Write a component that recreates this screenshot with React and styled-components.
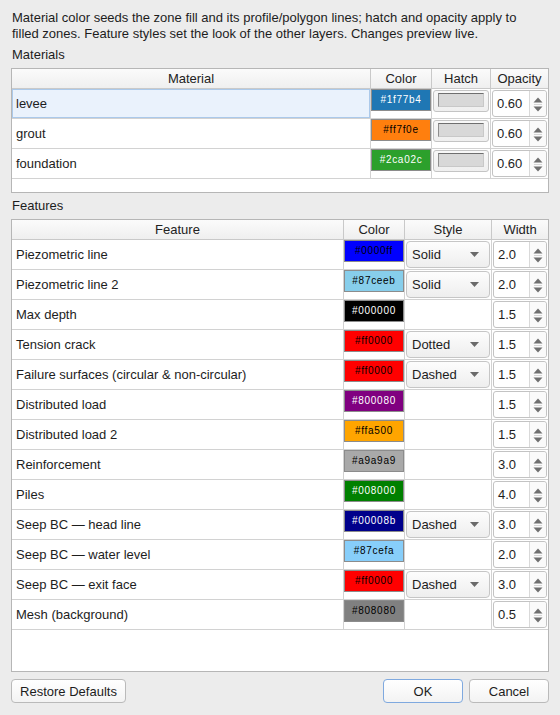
import styled, { createGlobalStyle } from "styled-components";

const materials = [
  { name: "levee", color: "#1f77b4", ink: "#fff", opacity: "0.60", selected: true },
  { name: "grout", color: "#ff7f0e", ink: "#000", opacity: "0.60" },
  { name: "foundation", color: "#2ca02c", ink: "#fff", opacity: "0.60" },
];

const features = [
  { name: "Piezometric line", color: "#0000ff", ink: "#000", style: "Solid", width: "2.0" },
  { name: "Piezometric line 2", color: "#87ceeb", ink: "#000", style: "Solid", width: "2.0" },
  { name: "Max depth", color: "#000000", ink: "#fff", width: "1.5" },
  { name: "Tension crack", color: "#ff0000", ink: "#000", style: "Dotted", width: "1.5" },
  { name: "Failure surfaces (circular & non-circular)", color: "#ff0000", ink: "#000", style: "Dashed", width: "1.5" },
  { name: "Distributed load", color: "#800080", ink: "#fff", width: "1.5" },
  { name: "Distributed load 2", color: "#ffa500", ink: "#000", width: "1.5" },
  { name: "Reinforcement", color: "#a9a9a9", ink: "#000", width: "3.0" },
  { name: "Piles", color: "#008000", ink: "#fff", width: "4.0" },
  { name: "Seep BC \u2014 head line", color: "#00008b", ink: "#fff", style: "Dashed", width: "3.0" },
  { name: "Seep BC \u2014 water level", color: "#87cefa", ink: "#000", width: "2.0" },
  { name: "Seep BC \u2014 exit face", color: "#ff0000", ink: "#000", style: "Dashed", width: "3.0" },
  { name: "Mesh (background)", color: "#808080", ink: "#000", width: "0.5" },
];

const MAT_COLS = "359px 61px 59px 1fr";
const FEAT_COLS = "332px 61px 87px 1fr";

function SpinBox({ value }) {
  return (
    <Spin>
      <SpinValue>{value}</SpinValue>
      <SpinArrows>
        <svg width="10" height="18" viewBox="0 0 10 18">
          <polygon points="0.5,7.5 9.5,7.5 5,2.5" fill="#6f6f6f" />
          <line x1="1" y1="9.5" x2="9" y2="9.5" stroke="#d6d6d6" strokeWidth="1" />
          <polygon points="0.5,11.5 9.5,11.5 5,16.5" fill="#6f6f6f" />
        </svg>
      </SpinArrows>
    </Spin>
  );
}

function Combo({ value }) {
  return (
    <ComboBox>
      <span>{value}</span>
      <svg width="9" height="5" viewBox="0 0 9 5">
        <polygon points="0,0 9,0 4.5,5" fill="#6a6a6a" />
      </svg>
    </ComboBox>
  );
}

export default function App() {
  return (
    <>
      <GlobalStyle />
      <Dialog>
        <Intro>
          Material color seeds the zone fill and its profile/polygon lines; hatch and opacity apply to
          <br />
          filled zones. Feature styles set the look of the other layers. Changes preview live.
        </Intro>

        <SectionLabel>Materials</SectionLabel>
        <Table $height={125}>
          <HeaderRow $cols={MAT_COLS}>
            <HeadCell>Material</HeadCell>
            <HeadCell>Color</HeadCell>
            <HeadCell>Hatch</HeadCell>
            <HeadCell>Opacity</HeadCell>
          </HeaderRow>
          {materials.map((m) => (
            <Row key={m.name} $cols={MAT_COLS}>
              <NameCell $selected={m.selected}>{m.name}</NameCell>
              <SwatchCell>
                <Swatch $bg={m.color} $ink={m.ink}>{m.color}</Swatch>
              </SwatchCell>
              <WidgetCell>
                <HatchButton>
                  <HatchFill />
                </HatchButton>
              </WidgetCell>
              <WidgetCell>
                <SpinBox value={m.opacity} />
              </WidgetCell>
            </Row>
          ))}
        </Table>

        <SectionLabel>Features</SectionLabel>
        <Table $height={453}>
          <HeaderRow $cols={FEAT_COLS}>
            <HeadCell>Feature</HeadCell>
            <HeadCell>Color</HeadCell>
            <HeadCell>Style</HeadCell>
            <HeadCell>Width</HeadCell>
          </HeaderRow>
          {features.map((f) => (
            <Row key={f.name} $cols={FEAT_COLS}>
              <NameCell>{f.name}</NameCell>
              <SwatchCell>
                <Swatch $bg={f.color} $ink={f.ink}>{f.color}</Swatch>
              </SwatchCell>
              <WidgetCell>{f.style && <Combo value={f.style} />}</WidgetCell>
              <WidgetCell>
                <SpinBox value={f.width} />
              </WidgetCell>
            </Row>
          ))}
        </Table>

        <ButtonBar>
          <Button $width={115}>Restore Defaults</Button>
          <ButtonGroup>
            <Button $width={80} $default>OK</Button>
            <Button $width={80}>Cancel</Button>
          </ButtonGroup>
        </ButtonBar>
      </Dialog>
    </>
  );
}

const GlobalStyle = createGlobalStyle`
  html, body {
    margin: 0;
    padding: 0;
    background: #ececec;
  }

  body {
    font-family: "Liberation Sans", Arial, sans-serif;
    font-size: 13px;
    color: #1d1d1d;
  }

  * {
    box-sizing: border-box;
  }
`;

const Dialog = styled.div`
  display: flex;
  flex-direction: column;
  width: 560px;
  height: 715px;
  padding: 10px 11px 0;
`;

const Intro = styled.p`
  margin: 0;
  padding-left: 1px;
  line-height: 16px;
  white-space: nowrap;
`;

const SectionLabel = styled.div`
  margin-top: 5px;
  padding-left: 1px;
  line-height: 16px;
`;

const Table = styled.div`
  height: ${(p) => p.$height}px;
  margin-top: 5px;
  border: 1px solid #b6b6b6;
  background: #ffffff;
  overflow: hidden;
`;

const HeaderRow = styled.div`
  display: grid;
  grid-template-columns: ${(p) => p.$cols};
  height: 20px;
  background: linear-gradient(#fbfbfb, #efefef);
  border-bottom: 1px solid #c9c9c9;
`;

const HeadCell = styled.div`
  text-align: center;
  line-height: 19px;
  color: #222;
  border-right: 1px solid #c9c9c9;

  &:last-child {
    border-right: none;
  }
`;

const Row = styled.div`
  display: grid;
  grid-template-columns: ${(p) => p.$cols};
  height: 30px;
  border-bottom: 1px solid #d2d2d2;

  & > div {
    border-right: 1px solid #d2d2d2;
  }

  & > div:last-child {
    border-right: none;
  }
`;

const NameCell = styled.div`
  display: flex;
  align-items: center;
  padding-left: 4px;
  white-space: nowrap;
  background: ${(p) => (p.$selected ? "#eaf2fc" : "transparent")};
  box-shadow: ${(p) => (p.$selected ? "inset 0 0 0 1px #abc9ea" : "none")};
`;

const SwatchCell = styled.div`
  display: flex;
  flex-direction: column;
`;

const Swatch = styled.div`
  height: 22px;
  background: ${(p) => p.$bg};
  border: 1px solid #8c8c8c;
  color: ${(p) => p.$ink};
  font-size: 10px;
  letter-spacing: 0.7px;
  line-height: 20px;
  text-align: center;
`;

const WidgetCell = styled.div`
  padding: 1px 1px 0 1px;
`;

const HatchButton = styled.div`
  height: 22px;
  padding: 2px 4px 4px;
  border: 1px solid #c4c4c4;
  border-radius: 3px;
  background: linear-gradient(#f8f8f8, #efefef);
`;

const HatchFill = styled.div`
  height: 100%;
  background: #d8d8d8;
  border-top: 1px solid #6e6e6e;
  border-left: 1px solid #8e8e8e;
  border-right: 1px solid #c8c8c8;
  border-bottom: 1px solid #c8c8c8;
`;

const Spin = styled.div`
  display: flex;
  height: 27px;
  border: 1px solid #c3c3c3;
  border-radius: 3px;
  background: #ffffff;
`;

const SpinValue = styled.div`
  flex: 1;
  padding-left: 4px;
  line-height: 25px;
`;

const SpinArrows = styled.div`
  display: flex;
  align-items: center;
  justify-content: center;
  width: 17px;
  border-left: 1px solid #d9d9d9;
  background: #fafafa;
  border-radius: 0 3px 3px 0;
`;

const ComboBox = styled.div`
  display: flex;
  align-items: center;
  justify-content: space-between;
  height: 27px;
  padding: 0 10px 0 5px;
  border: 1px solid #c6c6c6;
  border-radius: 4px;
  background: linear-gradient(#fdfdfd, #eeeeee);
`;

const ButtonBar = styled.div`
  display: flex;
  justify-content: space-between;
  margin-top: 7px;
`;

const ButtonGroup = styled.div`
  display: flex;
  column-gap: 6px;
`;

const Button = styled.button`
  width: ${(p) => p.$width}px;
  height: 24px;
  padding: 0;
  font-family: "Liberation Sans", Arial, sans-serif;
  font-size: 13px;
  color: #1d1d1d;
  border: 1px solid ${(p) => (p.$default ? "#7fa9df" : "#bababa")};
  border-radius: 4px;
  background: linear-gradient(#ffffff, #f3f3f3);
`;
